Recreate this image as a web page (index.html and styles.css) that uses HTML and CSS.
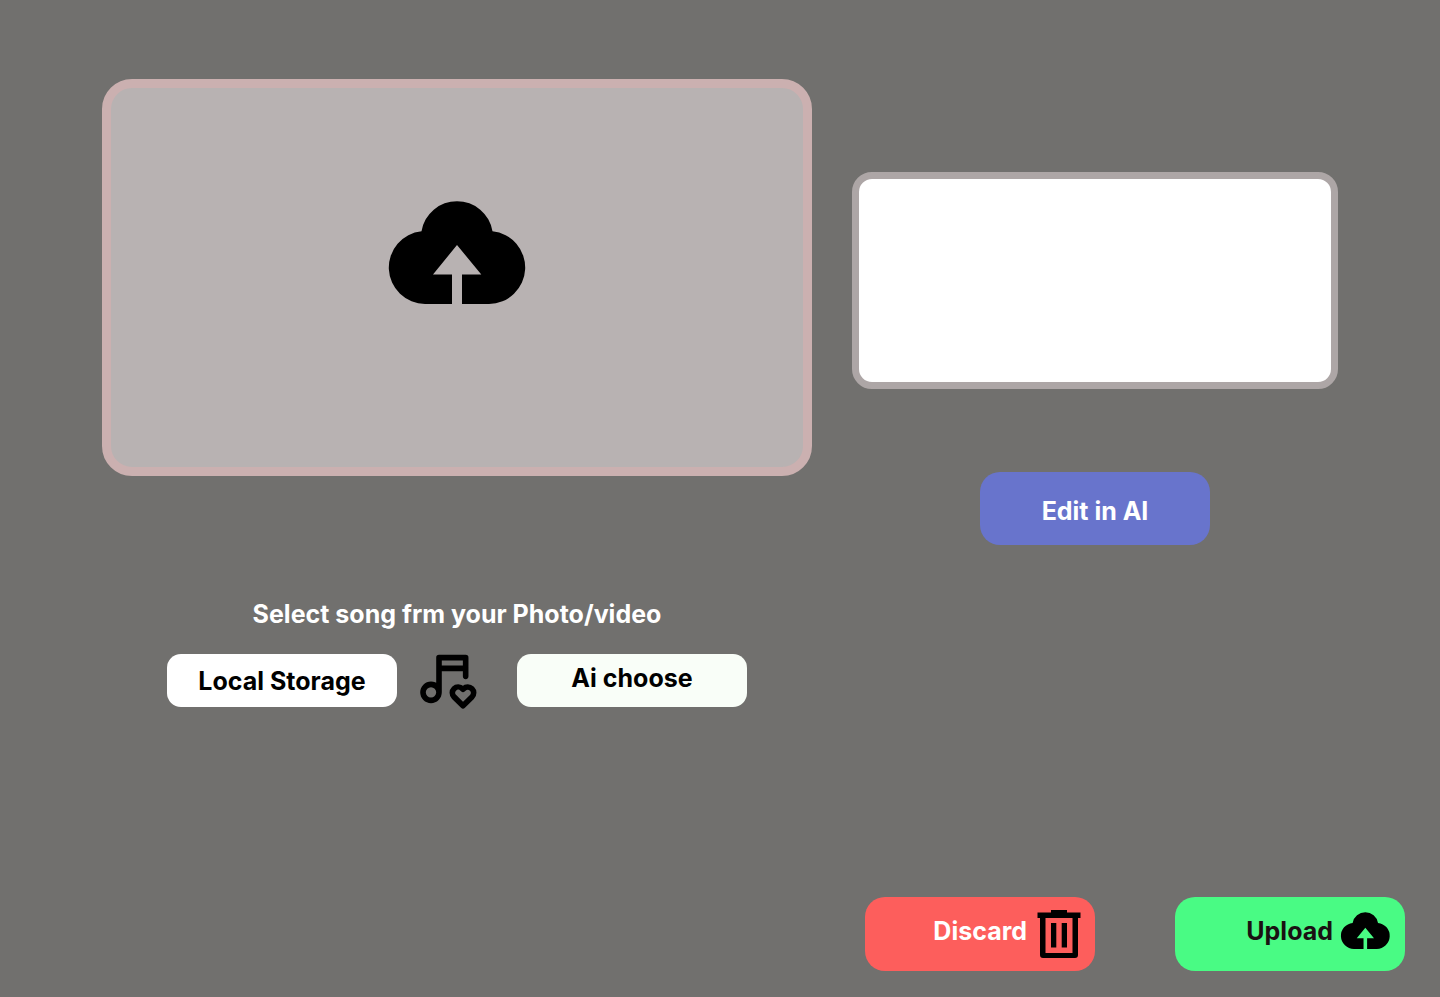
FILE: index.html
```html
<!DOCTYPE html>
<html lang="en">
<head>
<meta charset="utf-8">
<meta name="viewport" content="width=device-width, initial-scale=1">
<title>Upload</title>
<link rel="stylesheet" href="styles.css">
</head>
<body>
<svg class="sprite" aria-hidden="true">
  <symbol id="cloud" viewBox="0 0 137 103" overflow="visible">
    <path d="M32.500 30.200A36 36 0 0 1 103.500 30.200A36.500 36.500 0 0 1 100 103H73V73.500H92.300L68 44L44 73.500H63V103H36A36.500 36.500 0 0 1 32.500 30.200Z"/>
  </symbol>
</svg>
<main class="page">
  <div class="columns">
    <section class="media">
      <button class="dropzone" type="button" aria-label="Upload a photo or video">
        <svg class="dropzone-icon" aria-hidden="true"><use href="#cloud"/></svg>
      </button>
      <h1 class="song-title">Select song frm your Photo/video</h1>
      <div class="song-row">
        <button class="choice" type="button">Local Storage</button>
        <svg class="music-icon" viewBox="0 0 24 24" aria-hidden="true">
          <path d="M3 17a3 3 0 1 0 6 0a3 3 0 0 0-6 0M9 17V4h10v7M9 8h10"/>
          <path d="M18 22l3.350-3.284a2.143 2.143 0 0 0 .005-3.071a2.242 2.242 0 0 0-3.129-.006l-.224.22l-.223-.22a2.242 2.242 0 0 0-3.128-.006a2.143 2.143 0 0 0-.006 3.071L18 22z"/>
        </svg>
        <button class="choice choice-ai" type="button">Ai choose</button>
      </div>
    </section>
    <section class="editor">
      <textarea class="prompt" aria-label="Description"></textarea>
      <button class="edit" type="button">Edit in AI</button>
    </section>
  </div>
  <footer class="actions">
    <button class="action discard" type="button">
      <span>Discard</span>
      <svg class="trash-icon" viewBox="0 0 44 48" aria-hidden="true">
        <path fill-rule="evenodd" d="M14 0H30V2.500H43.500V8H41V45Q41 48 38 48H6Q3 48 3 45V8H.5V2.500H14ZM8.500 8V43H35.500V8ZM14 13H19.300V37.500H14ZM24.700 13H30V37.500H24.700Z"/>
      </svg>
    </button>
    <button class="action upload" type="button">
      <span>Upload</span>
      <svg class="cloud-icon" aria-hidden="true"><use href="#cloud"/></svg>
    </button>
  </footer>
</main>
</body>
</html>
```
FILE: styles.css
```css
* { box-sizing: border-box; }
body {
  margin: 0;
  background: #71706e;
  color: #000;
  font-family: Inter, "Liberation Sans", sans-serif;
}
button {
  border: 0;
  padding: 0;
  color: inherit;
  font: inherit;
  cursor: pointer;
}
.sprite { position: absolute; width: 0; height: 0; }
.page {
  display: flex;
  flex-direction: column;
  justify-content: space-between;
  min-height: 100vh;
  padding: 79px 35px 26px;
  font-size: 25px;
  font-weight: 700;
  line-height: 30px;
}
.columns {
  display: grid;
  grid-template-columns: 710fr 486fr;
  gap: 40px;
  padding: 0 67px;
}
.media, .editor {
  display: flex;
  flex-direction: column;
  align-items: center;
}
.dropzone {
  width: 100%;
  padding: 113px 0 163px;
  border: 9px solid #cbb0b0;
  border-radius: 30px;
  background: #b8b2b2;
  line-height: 0;
}
.dropzone-icon { width: 137px; height: 103px; overflow: visible; }
.song-title {
  margin: 123px 0 25px;
  color: #fff;
  font: inherit;
}
.song-row {
  display: flex;
  align-items: center;
}
.choice {
  width: 230px;
  height: 53px;
  border-radius: 14px;
  background: #fff;
}
.choice-ai {
  padding-bottom: 6px;
  background: #f9fef8;
}
.music-icon {
  width: 64px;
  height: 64px;
  margin: -8px 38px -4px 18px;
  fill: none;
  stroke: #000;
  stroke-width: 2.1;
  stroke-linecap: round;
  stroke-linejoin: round;
}
.editor { padding-top: 93px; }
.prompt {
  width: 100%;
  height: 217px;
  padding: 16px;
  border: 7px solid #ada6a6;
  border-radius: 20px;
  background: #fff;
  font: inherit;
  resize: none;
}
.edit {
  width: 230px;
  height: 73px;
  margin-top: 83px;
  padding-top: 4px;
  border-radius: 20px;
  background: #6874cc;
  color: #fff;
}
.actions {
  display: flex;
  justify-content: flex-end;
  gap: 80px;
}
.action {
  display: flex;
  align-items: center;
  justify-content: flex-end;
  width: 230px;
  height: 74px;
  padding: 0 15px 6px 0;
  border-radius: 20px;
}
.discard {
  gap: 10px;
  padding-right: 14px;
  background: #fd5e5c;
  color: #fff;
}
.upload {
  gap: 8px;
  background: #49fb84;
  color: #1a1212;
}
.trash-icon { width: 44px; height: 48px; margin-top: 6px; fill: #000; }
.cloud-icon { width: 49px; height: 37px; margin-bottom: 2px; overflow: visible; fill: #000; }
```
